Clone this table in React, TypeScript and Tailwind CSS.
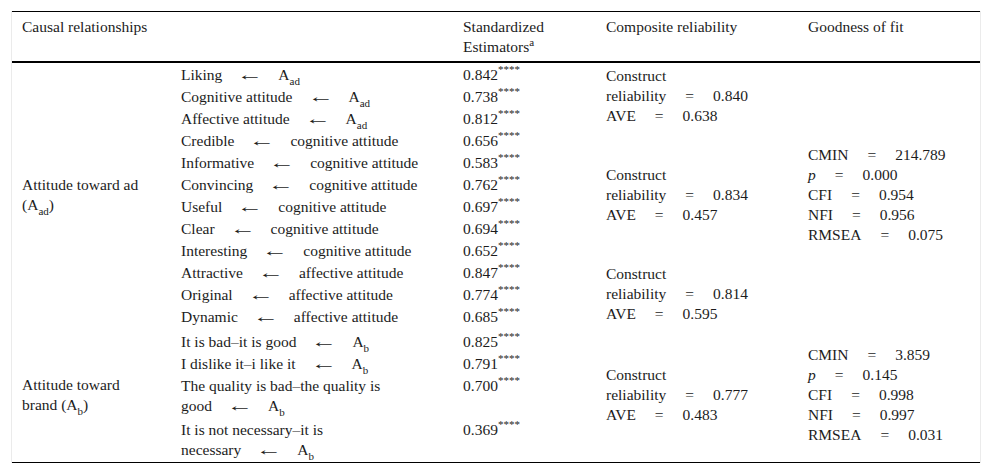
import React from 'react'

const Sub: React.FC<{ children: React.ReactNode }> = ({ children }) => (
  <sub className="text-[11px] -bottom-[5px]">{children}</sub>
)

const Stars = () => <sup className="text-[11px] -top-[7px]">****</sup>

// the source uses a long thin arrow, so the glyph is stretched a little
const Arrow = () => (
  <span className="inline-block w-[18px] ml-[19px] mr-[19px] text-center scale-x-[1.7]">←</span>
)

const Eq = () => <span className="mx-[19px]">=</span>

const Aad = () => (
  <>
    A<Sub>ad</Sub>
  </>
)

const Ab = () => (
  <>
    A<Sub>b</Sub>
  </>
)

const adRows: { left: string; right: React.ReactNode; est: string }[] = [
  { left: 'Liking', right: <Aad />, est: '0.842' },
  { left: 'Cognitive attitude', right: <Aad />, est: '0.738' },
  { left: 'Affective attitude', right: <Aad />, est: '0.812' },
  { left: 'Credible', right: 'cognitive attitude', est: '0.656' },
  { left: 'Informative', right: 'cognitive attitude', est: '0.583' },
  { left: 'Convincing', right: 'cognitive attitude', est: '0.762' },
  { left: 'Useful', right: 'cognitive attitude', est: '0.697' },
  { left: 'Clear', right: 'cognitive attitude', est: '0.694' },
  { left: 'Interesting', right: 'cognitive attitude', est: '0.652' },
  { left: 'Attractive', right: 'affective attitude', est: '0.847' },
  { left: 'Original', right: 'affective attitude', est: '0.774' },
  { left: 'Dynamic', right: 'affective attitude', est: '0.685' },
]

const Reliability: React.FC<{ cr: string; ave: string }> = ({ cr, ave }) => (
  <>
    Construct
    <br />
    reliability
    <Eq />
    {cr}
    <br />
    AVE
    <Eq />
    {ave}
  </>
)

const Fit: React.FC<{ cmin: string; p: string; cfi: string; nfi: string; rmsea: string }> = ({
  cmin,
  p,
  cfi,
  nfi,
  rmsea,
}) => (
  <>
    CMIN
    <Eq />
    {cmin}
    <br />
    <i>p</i>
    <Eq />
    {p}
    <br />
    CFI
    <Eq />
    {cfi}
    <br />
    NFI
    <Eq />
    {nfi}
    <br />
    RMSEA
    <Eq />
    {rmsea}
  </>
)

const th = 'text-left font-normal align-top pt-[5px] pb-[4px] pl-[10px] border-b-2 border-black'
const td = 'align-top pt-[2px] pl-[10px]'
const span = 'align-middle py-0 pl-[10px]'

export default function App() {
  return (
    <div className="min-h-screen bg-white pt-[11px] px-[11px] [font-family:Liberation_Serif,Times_New_Roman,serif] text-[15.5px] leading-[20px] text-[#1c1c1c]">
      <div className="border-x border-[#ebebeb]">
        <table className="w-full table-fixed border-separate border-spacing-0 border-t border-b border-black">
          <colgroup>
            <col className="w-[159px]" />
            <col className="w-[282px]" />
            <col className="w-[143px]" />
            <col className="w-[202px]" />
            <col />
          </colgroup>
          <thead>
            <tr>
              <th colSpan={2} className={`${th} pl-[9px]`}>
                Causal relationships
              </th>
              <th className={th}>
                Standardized
                <br />
                Estimators<sup className="text-[11px] -top-[6px]">a</sup>
              </th>
              <th className={th}>Composite reliability</th>
              <th className={th}>Goodness of fit</th>
            </tr>
          </thead>
          <tbody>
            {adRows.map((r, i) => (
              <tr key={r.left}>
                {i === 0 && (
                  <td rowSpan={12} className={`${span} pl-[9px]`}>
                    Attitude toward ad
                    <br />
                    (<Aad />)
                  </td>
                )}
                <td className={td}>
                  {r.left}
                  <Arrow />
                  {r.right}
                </td>
                <td className={td}>
                  {r.est}
                  <Stars />
                </td>
                {i === 0 && (
                  <td rowSpan={3} className={span}>
                    <Reliability cr="0.840" ave="0.638" />
                  </td>
                )}
                {i === 3 && (
                  <td rowSpan={6} className={span}>
                    <Reliability cr="0.834" ave="0.457" />
                  </td>
                )}
                {i === 9 && (
                  <td rowSpan={3} className={span}>
                    <Reliability cr="0.814" ave="0.595" />
                  </td>
                )}
                {i === 0 && (
                  <td rowSpan={12} className={span}>
                    <Fit cmin="214.789" p="0.000" cfi="0.954" nfi="0.956" rmsea="0.075" />
                  </td>
                )}
              </tr>
            ))}
            <tr>
              <td rowSpan={4} className={`${span} pl-[9px]`}>
                Attitude toward
                <br />
                brand (<Ab />)
              </td>
              <td className="align-top pt-[5px] pl-[10px]">
                It is bad–it is good
                <Arrow />
                <Ab />
              </td>
              <td className="align-top pt-[5px] pl-[10px]">
                0.825
                <Stars />
              </td>
              <td rowSpan={4} className={span}>
                <Reliability cr="0.777" ave="0.483" />
              </td>
              <td rowSpan={4} className={span}>
                <Fit cmin="3.859" p="0.145" cfi="0.998" nfi="0.997" rmsea="0.031" />
              </td>
            </tr>
            <tr>
              <td className={td}>
                I dislike it–i like it
                <Arrow />
                <Ab />
              </td>
              <td className={td}>
                0.791
                <Stars />
              </td>
            </tr>
            <tr>
              <td className={td}>
                The quality is bad–the quality is
                <br />
                good
                <Arrow />
                <Ab />
              </td>
              <td className={td}>
                0.700
                <Stars />
              </td>
            </tr>
            <tr>
              <td className="align-top pt-[4px] pb-[2px] pl-[10px]">
                It is not necessary–it is
                <br />
                necessary
                <Arrow />
                <Ab />
              </td>
              <td className="align-top pt-[4px] pb-[2px] pl-[10px]">
                0.369
                <Stars />
              </td>
            </tr>
          </tbody>
        </table>
      </div>
    </div>
  )
}
